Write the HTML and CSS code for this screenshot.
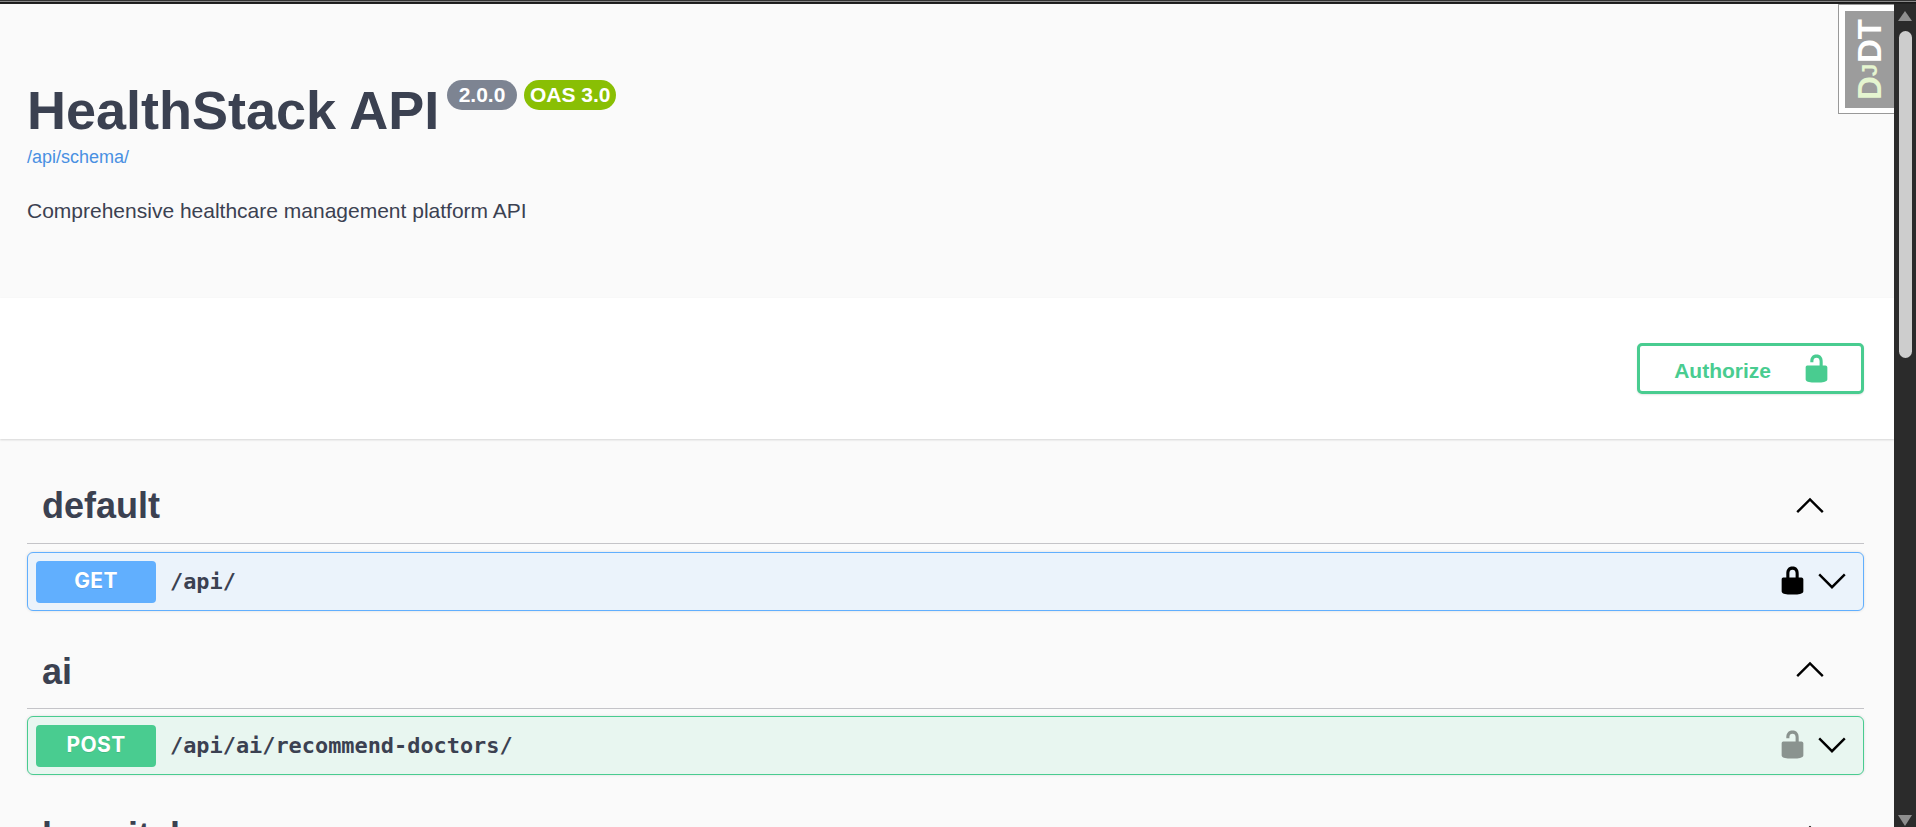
FILE: index.html
```html
<!DOCTYPE html>
<html>
<head>
    <title>HealthStack API</title>
    <link rel="stylesheet" href="styles.css">
</head>
<body>
    <div class="top-rule"></div>
    <div class="page">
        <div class="scroll-area">
            <section class="info">
                <h1>HealthStack API<span class="stamps"><span class="stamp version">2.0.0</span><span class="stamp oas">OAS 3.0</span></span></h1>
                <a class="schema-link" href="#">/api/schema/</a>
                <p class="description">Comprehensive healthcare management platform API</p>
            </section>
            <section class="scheme-bar">
                <button class="authorize">
                    <span class="authorize-label">Authorize</span>
                    <svg class="lock" viewBox="0 0 20 20"><path d="M15.8 8H14V5.6C14 2.703 12.665 1 10 1 7.334 1 6 2.703 6 5.6V6h2v-.801C8 3.754 8.797 3 10 3c1.203 0 2 .754 2 2.199V8H4c-.553 0-1 .646-1 1.199V17c0 .549.428 1.139.951 1.307l1.197.387C5.672 18.861 6.45 19 7 19h6c.551 0 1.327-.139 1.849-.307l1.199-.387c.524-.167.952-.757.952-1.306V9.199C17 8.646 16.352 8 15.8 8z"/></svg>
                </button>
            </section>
            <section class="tags">
                <div class="tag-block">
                    <div class="tag-head">
                        <h3>default</h3>
                        <svg class="arrow" viewBox="0 0 20 20"><path d="M2 14.5 10 6.5 18 14.5"/></svg>
                    </div>
                    <div class="op op-get">
                        <span class="method">GET</span>
                        <span class="path">/api/</span>
                        <svg class="op-lock locked" viewBox="0 0 20 20"><path d="M15.8 8H14V5.6C14 2.703 12.665 1 10 1 7.334 1 6 2.703 6 5.6V8H4c-.553 0-1 .646-1 1.199V17c0 .549.428 1.139.951 1.307l1.197.387C5.672 18.861 6.45 19 7 19h6c.551 0 1.327-.139 1.849-.307l1.199-.387c.524-.167.952-.757.952-1.306V9.199C17 8.646 16.352 8 15.8 8zM12 8H8V5.199C8 3.754 8.797 3 10 3c1.203 0 2 .754 2 2.199V8z"/></svg>
                        <svg class="arrow" viewBox="0 0 20 20"><path d="M2 6.5 10 14.5 18 6.5"/></svg>
                    </div>
                </div>
                <div class="tag-block">
                    <div class="tag-head">
                        <h3>ai</h3>
                        <svg class="arrow" viewBox="0 0 20 20"><path d="M2 14.5 10 6.5 18 14.5"/></svg>
                    </div>
                    <div class="op op-post">
                        <span class="method">POST</span>
                        <span class="path">/api/ai/recommend-doctors/</span>
                        <svg class="op-lock unlocked" viewBox="0 0 20 20"><path d="M15.8 8H14V5.6C14 2.703 12.665 1 10 1 7.334 1 6 2.703 6 5.6V6h2v-.801C8 3.754 8.797 3 10 3c1.203 0 2 .754 2 2.199V8H4c-.553 0-1 .646-1 1.199V17c0 .549.428 1.139.951 1.307l1.197.387C5.672 18.861 6.45 19 7 19h6c.551 0 1.327-.139 1.849-.307l1.199-.387c.524-.167.952-.757.952-1.306V9.199C17 8.646 16.352 8 15.8 8z"/></svg>
                        <svg class="arrow" viewBox="0 0 20 20"><path d="M2 6.5 10 14.5 18 6.5"/></svg>
                    </div>
                </div>
                <div class="tag-block">
                    <div class="tag-head">
                        <h3>hospitals</h3>
                        <svg class="arrow" viewBox="0 0 20 20"><path d="M2 14.5 10 6.5 18 14.5"/></svg>
                    </div>
                </div>
            </section>
            <div class="djdt"><span class="djdt-label"><span class="djdt-dj">D<span class="djdt-j">J</span></span>DT</span></div>
        </div>
        <div class="scrollbar">
            <span class="sb-up"></span>
            <span class="sb-thumb"></span>
            <span class="sb-down"></span>
        </div>
    </div>
</body>
</html>
```

FILE: styles.css
```css
html, body {
    height: 100%;
    margin: 0;
    overflow: hidden;
}
body {
    font-family: "Liberation Sans", Arial, sans-serif;
    background: #fafafa;
    color: #3b4151;
    display: flex;
    flex-direction: column;
}
.top-rule {
    height: 3px;
    background: linear-gradient(#333 1px, #888 1px, #888 2px, #1a1a1a 2px);
    border-bottom: 1px solid #222;
    flex: none;
}
.page {
    flex: 1;
    display: flex;
    min-height: 0;
}
.scroll-area {
    flex: 1;
    position: relative;
    overflow: hidden;
    min-width: 0;
}
.scrollbar {
    width: 22px;
    flex: none;
    background: #2b2b2b;
    display: flex;
    flex-direction: column;
    align-items: center;
}

.sb-up {
    width: 0;
    height: 0;
    margin-top: 7px;
    border-left: 7px solid transparent;
    border-right: 7px solid transparent;
    border-bottom: 10px solid #8e8e8e;
}
.sb-thumb {
    width: 13px;
    height: 327px;
    margin-top: 10px;
    background: #cdcdcd;
    border-radius: 7px;
}
.sb-down {
    width: 0;
    height: 0;
    margin-top: auto;
    margin-bottom: 1px;
    border-left: 7px solid transparent;
    border-right: 7px solid transparent;
    border-top: 11px solid #8e8e8e;
}

.info {
    padding: 74px 27px 0;
    height: 294px;
    box-sizing: border-box;
    background: #fafafa;
}
.info h1 {
    margin: 0;
    font-size: 54px;
    line-height: 64px;
    font-weight: 700;
    color: #3b4151;
}
.stamps {
    display: inline-flex;
    gap: 7px;
    margin-left: 8px;
    vertical-align: 27px;
}
.stamp {
    font-size: 21px;
    line-height: 30px;
    height: 30px;
    padding: 0 11.5px;
    border-radius: 15px;
    color: #fff;
    font-weight: 700;
}
.version { background: #7d8492; }
.oas { background: #89bf04; padding: 0 6px; }
.schema-link {
    display: block;
    margin-top: 5px;
    font-size: 18px;
    color: #4990e2;
    text-decoration: none;
}
.description {
    margin: 31px 0 0;
    font-size: 21px;
    line-height: 24px;
    color: #3b4151;
}

.scheme-bar {
    height: 141px;
    box-sizing: border-box;
    background: #fff;
    box-shadow: 0 1px 2px rgba(0,0,0,0.15);
    display: flex;
    align-items: center;
    justify-content: flex-end;
    padding: 0 30px 0 0;
}
.authorize {
    width: 227px;
    height: 51px;
    box-sizing: border-box;
    background: #fff;
    border: 3px solid #49cc90;
    border-radius: 5px;
    box-shadow: 0 1px 2px rgba(0,0,0,0.1);
    color: #49cc90;
    font-family: inherit;
    font-size: 21px;
    font-weight: 700;
    display: flex;
    align-items: center;
    justify-content: flex-end;
    gap: 30px;
    padding: 0 29px 0 0;
}
.authorize-label {
    padding-top: 4px;
}
.lock {
    width: 31px;
    height: 31px;
    fill: #49cc90;
}

.tags {
    padding: 0 30px 0 27px;
}
.tag-head {
    height: 105px;
    box-sizing: border-box;
    display: flex;
    align-items: center;
    justify-content: space-between;
    padding: 30px 38px 0 15px;
    border-bottom: 1px solid #c4c4c8;
}
.tag-block + .tag-block .tag-head {
    height: 98px;
    padding-top: 24px;
}
.tag-head h3 {
    margin: 0;
    font-size: 36px;
    font-weight: 700;
    color: #3b4151;
}
.tag-head .arrow {
    margin-bottom: 2px;
}
.tag-block + .tag-block .tag-head .arrow {
    margin-bottom: 5px;
}
.arrow {
    width: 32px;
    height: 32px;
    fill: none;
    stroke: #000;
    stroke-width: 1.5;
}
.op {
    height: 59px;
    box-sizing: border-box;
    margin: 8px 0 0;
    border-radius: 6px;
    border: 1px solid;
    display: flex;
    align-items: center;
    padding: 0 15px 0 8px;
    box-shadow: 0 0 3px rgba(0,0,0,0.12);
}
.tag-block + .tag-block .op {
    margin-top: 7px;
}
.op .arrow,
.op .op-lock {
    margin-bottom: 3px;
}
.op-get {
    background: #ebf3fb;
    border-color: #61affe;
}
.op-post {
    background: #e8f6f0;
    border-color: #49cc90;
}
.method {
    width: 120px;
    height: 42px;
    box-sizing: border-box;
    padding-bottom: 2px;
    border-radius: 4px;
    color: #fff;
    font-family: Inter, sans-serif;
    font-size: 21px;
    font-weight: 700;
    letter-spacing: 0.4px;
    text-shadow: 0 1px 0 rgba(0,0,0,0.1);
    display: flex;
    align-items: center;
    justify-content: center;
}
.op-get .method { background: #61affe; }
.op-post .method { background: #49cc90; }
.path {
    margin-left: 14px;
    font-family: "DejaVu Sans Mono", monospace;
    font-size: 21.9px;
    font-weight: 700;
    color: #3b4151;
    flex: 1;
}
.op-lock {
    width: 31px;
    height: 31px;
    margin-right: 8px;
}
.locked { fill: #000; }
.unlocked { fill: #000; opacity: 0.4; }

.djdt {
    position: absolute;
    top: 0;
    right: 0;
    width: 56px;
    height: 110px;
    box-sizing: border-box;
    background: #fff;
    border: 1px solid #999;
    border-right: 0;
    padding: 6px 0 5px 6px;
}
.djdt-label {
    display: flex;
    align-items: center;
    justify-content: center;
    width: 100%;
    height: 100%;
    background: #9c9c9c;
    color: #fff;
    font-family: "Liberation Sans", sans-serif;
    font-size: 33px;
    font-weight: 700;
    line-height: 1;
    writing-mode: vertical-rl;
    transform: rotate(180deg);
}
.djdt-dj { color: #e5f5d0; }
.djdt-j { font-size: 68%; }
```
